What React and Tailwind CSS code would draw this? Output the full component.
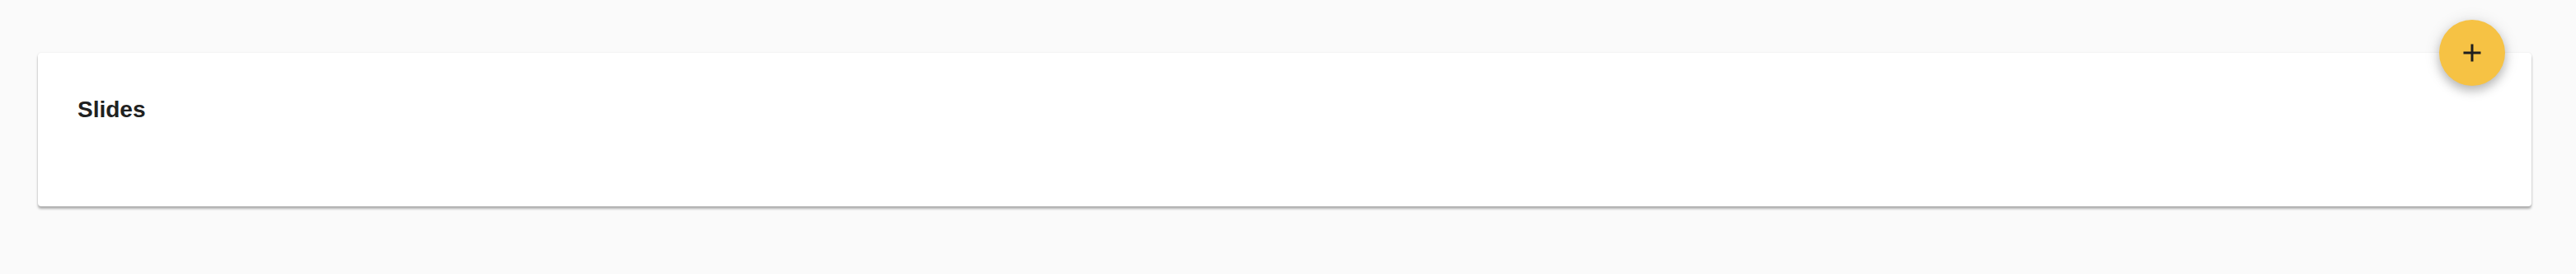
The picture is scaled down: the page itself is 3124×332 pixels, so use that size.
import React from "react";

export default function App() {
  return (
    <div className="min-h-[332px] w-full bg-[#fafafa] pt-[64px] pl-[46px] pr-[54px]" style={{ fontFamily: '"Liberation Sans", Arial, sans-serif' }}>
      <div className="relative h-[186px] rounded-[4px] bg-white shadow-[0_3px_3px_rgba(0,0,0,0.3),0_0_2px_rgba(0,0,0,0.1)] pl-[48px] pt-[53px]">
        <h2 className="text-[28px] leading-[32px] font-bold text-[#212121]">Slides</h2>
        <button className="absolute right-[32px] top-[-40px] flex h-[80px] w-[80px] items-center justify-center rounded-full bg-[#f6c244] shadow-[0_6px_12px_rgba(0,0,0,0.22),0_2px_20px_rgba(0,0,0,0.12)]">
          <svg width="22" height="22" viewBox="0 0 22 22">
            <path d="M11 0.5V21.5M0.5 11H21.5" stroke="#1f1f1f" strokeWidth="3" />
          </svg>
        </button>
      </div>
    </div>
  );
}
